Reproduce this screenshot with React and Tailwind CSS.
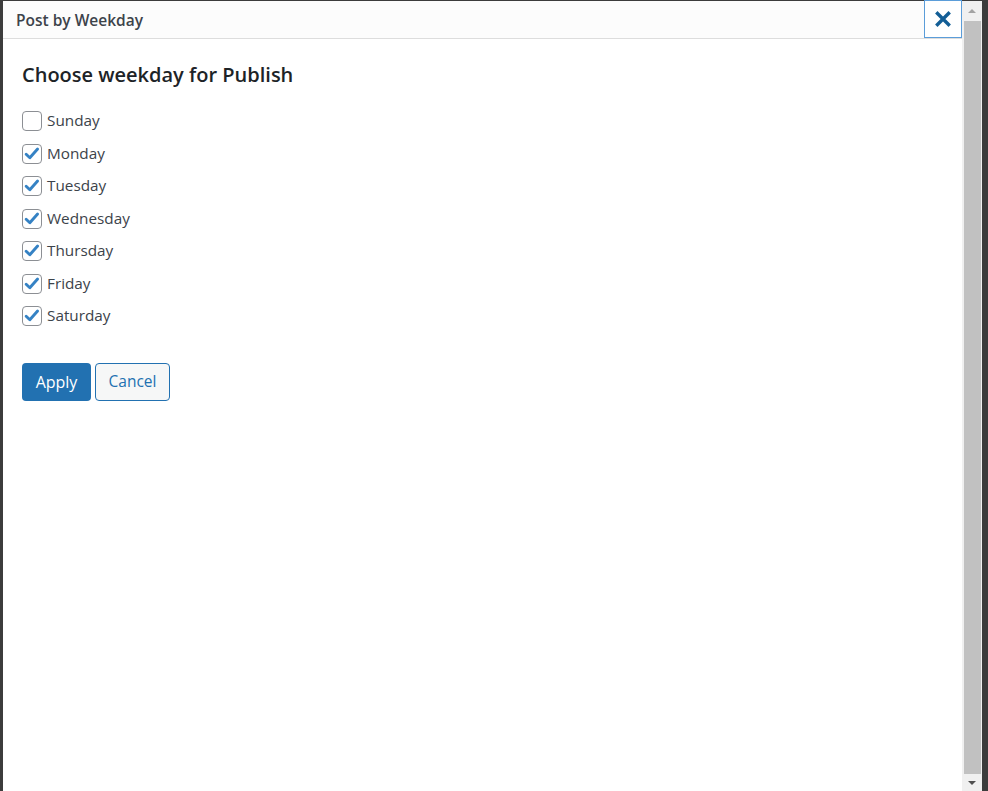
import React from "react";

const days = [
  ["Sunday", false],
  ["Monday", true],
  ["Tuesday", true],
  ["Wednesday", true],
  ["Thursday", true],
  ["Friday", true],
  ["Saturday", true],
];

function Check({ checked }) {
  return (
    <span className="w-[20px] h-[20px] rounded-[4px] border border-[#8c8f94] bg-white flex items-center justify-center shrink-0">
      {checked && (
        <svg width="18" height="18" viewBox="0 0 20 20">
          <path d="M3.5 10.2 L7.6 14.2 L16.2 4.4" fill="none" stroke="#3582c4" strokeWidth="3.2" strokeLinecap="round" strokeLinejoin="round" />
        </svg>
      )}
    </span>
  );
}

export default function App() {
  return (
    <div
      className="w-[988px] h-[791px] bg-[#3c3c3c] pt-[1px] pl-[3px] pr-[6px] flex overflow-hidden"
      style={{ fontFamily: '"Open Sans", "Noto Sans", sans-serif' }}
    >
      <div className="flex-1 flex bg-white">
        <div className="flex-1 flex flex-col">
          <div className="h-[38px] bg-[#fcfcfc] border-b border-[#dddddd] flex items-center justify-between">
            <div className="pl-[13px] pt-[3px] text-[15.5px] font-semibold text-[#3c434a] leading-none">Post by Weekday</div>
            <div className="w-[38px] h-[38px] -mt-[1px] border border-[#5b9dd9] bg-white flex items-center justify-center">
              <svg width="16" height="16" viewBox="0 0 16 16">
                <path d="M2.5 2.5 L13.5 13.5 M13.5 2.5 L2.5 13.5" stroke="#135e96" strokeWidth="3.4" strokeLinecap="square" />
              </svg>
            </div>
          </div>
          <div className="pl-[19px] pt-[22px]">
            <h2 className="text-[20px] font-semibold text-[#1d2327] leading-[28px]">Choose weekday for Publish</h2>
            <div className="mt-[22px] flex flex-col gap-[12.5px]">
              {days.map(([d, c]) => (
                <label key={d} className="flex items-center gap-[5px] h-[20px]">
                  <Check checked={c} />
                  <span className="text-[15.3px] text-[#3c434a] leading-none">{d}</span>
                </label>
              ))}
            </div>
            <div className="mt-[37px] flex gap-[4px]">
              <button className="h-[38px] w-[69px] rounded-[4px] bg-[#2271b1] text-white text-[16px]">Apply</button>
              <button className="h-[38px] w-[75px] rounded-[4px] border border-[#2271b1] bg-[#f6f7f7] text-[#2271b1] text-[15.5px]">Cancel</button>
            </div>
          </div>
        </div>
        <div className="w-[20px] bg-[#f0f0f0] flex flex-col items-center">
          <div className="h-[20px] flex items-center justify-center">
            <div className="w-0 h-0 border-l-[4px] border-r-[4px] border-b-[4px] border-l-transparent border-r-transparent border-b-[#a3a3a3]" />
          </div>
          <div className="flex-1 w-[17px] bg-[#c1c1c1] ml-[2px] mr-[1px]" />
          <div className="h-[17px] flex items-center justify-center">
            <div className="w-0 h-0 border-l-[4px] border-r-[4px] border-t-[4px] border-l-transparent border-r-transparent border-t-[#505050]" />
          </div>
        </div>
      </div>
    </div>
  );
}
